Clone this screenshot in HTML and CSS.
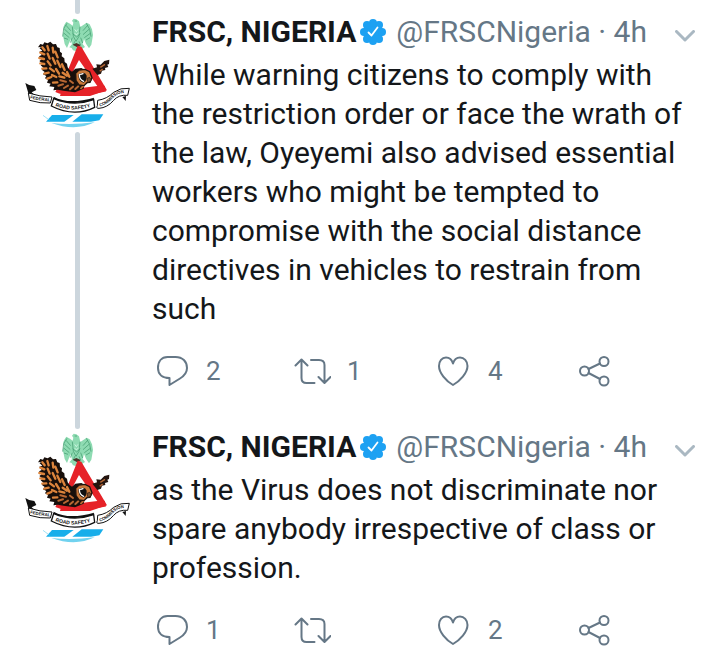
FILE: index.html
```html
<!DOCTYPE html>
<html lang="en">
<head>
    <meta charset="UTF-8">
    <meta name="viewport" content="width=device-width, initial-scale=1.0">
    <title>FRSC, NIGERIA</title>
    <link rel="stylesheet" href="styles.css">
</head>
<body>
    <svg class="symbols" aria-hidden="true">
        <symbol id="crest" viewBox="45 54 315 330">
            <!-- green eagle -->
            <path d="M199 58l-8-2-5 6 4 6-2 9-8-6-11-6-5 8-4 9 1 13-3 10 3 12 3 15 7 12 6-15 5-11 4 15-8 9 7 2 4 7 9 2 14-1 7-7 6-4-7-9 4-15 6 14 9 14 7-11 3-17 2-12-3-17-7-15-9-5-10 7-9 6-2-9-2-8z" fill="#8edbb2"/>
            <path d="M168 76l14 16M163 87l18 17M161 99l17 14M162 114l12 4M233 76l-14 16M238 87l-19 17M241 100l-18 13M240 113l-12 7M187 80l3 29 8 15 9-15 3-29M188 101l12 10 11-10M187 113l-6 15M212 113l6 16M194 124l-4 12M207 124l5 12M194 63h7M171 70l-10 16-3 24M229 70l10 18 4 22" fill="none" stroke="#3c9569" stroke-width="2"/>
            <path d="M194 88l5 7 5-7M194 99l5 6 7-7" fill="none" stroke="#e2fff0" stroke-width="2"/>
            <path d="M188 134l11-5 13 6-8 8z" fill="#4a352a"/>
            <!-- water -->
            <path d="M126 345h65l-28 20h-55z" fill="#17aeea"/>
            <path d="M215 343h65l-12 18-25 4h-56z" fill="#17aeea"/>
            <path d="M124 369q60 7 130-2-58 28-130 2z" fill="#71d2ef"/>
            <path d="M99 346l20 15" stroke="#71d2ef" stroke-width="2"/>
            <!-- warning triangle -->
            <path d="M203 137L168 225 150 288H240L291 271 214 140ZM207 180L262 258 195 266 188 216Z" fill="#e62228" fill-rule="evenodd"/>
            <path d="M140 268q40 20 146-2" fill="none" stroke="#e62228" stroke-width="18"/>
            <!-- owl wing and body -->
            <path d="M84 142l7-10 8 2 4-7 10 3 8-5 8 8 9-1 4 10 7 2 1 11 6 5-1 9 8 6 1 11 7 5 2 11 6 8 7 5 10-9 18-2 18 10 8 13-4 21-12 3-3 15-26 11-35-5-16-3-14 2 3-10-15-2 4-8-11-3 3-8-9-5 4-7-10-5 5-7-9-7 6-5-9-8 6-5-10-8 7-5-8-9 8-4-7-10 9-3-9-8 8-4z" fill="#180f0b"/>
            <path d="M97 142l7 9M91 158l12 5M112 138l4 13M88 174l14 3M91 190l12 2M97 206l12-1M103 221l13-3M112 236l12-5M113 161l6 15M128 143l2 15M136 155l7 17M113 184l9 12M128 174l8 17M120 205l12 9M142 182l9 19M126 225l13 6M138 207l9 14M156 193l8 17M148 229l15 4M158 218l13 9M129 248l13-1M171 216l7 14" fill="none" stroke="#dc843c" stroke-width="7" stroke-linecap="round"/>
            <path d="M145 257l14-4M162 264l12-7M180 268l9-8M196 267l9-8M213 265l8-8M151 241l17 4M180 242l9 7" fill="none" stroke="#b76733" stroke-width="6" stroke-linecap="round"/>
            <!-- owl head -->
            <path d="M197 220l10-10 18-2 14 7 7 18-6 14-9 1-9 9-15-2-9-13z" fill="#c9783a" stroke="#1d120d" stroke-width="4"/>
            <path d="M205 223q20-11 25 4 1 16-10 21-16-5-15-25z" fill="#111"/>
            <path d="M208 223q0 17 13 21M212 223l7-2" fill="none" stroke="#fff" stroke-width="4" stroke-linecap="round"/>
            <path d="M231 235l3 13 10-7-5-9z" fill="#7b5130" stroke="#24150f" stroke-width="2"/>
            <!-- far wing -->
            <path d="M247 206l14-4-2-9 13 1 11-11 15-4-1 13-5 2 3 7-10 3 1 6-10 2-3 9-11 4z" fill="#24150f"/>
            <path d="M271 202l14-9M269 214l9-7" stroke="#b76733" stroke-width="4"/>
            <!-- ribbon -->
            <path d="M131 290q45 25 121 3l-2 15q-65 22-121-2z" fill="#111"/>
            <path d="M46 249q12 9 27 9l6 12-14 7 8 7-17-1z" fill="#111"/>
            <path d="M55 279q34 11 71 12l-5 18q-30 2-62-8z" fill="#fff" stroke="#111" stroke-width="3"/>
            <path d="M131 296q60 25 120 3l3 23q-62 31-130-4z" fill="#fff" stroke="#111" stroke-width="4"/>
            <path d="M263 301q28-4 48-24 21-15 47-12l-5 21q-27-3-43 16-18 21-43 23-10 1-5-8z" fill="#fff" stroke="#111" stroke-width="3"/>
            <path d="M337 291l10 12 1-15z" fill="#111"/>
            <path id="ribbon-left" d="M60 295q30 9 75 9" fill="none"/>
            <path id="ribbon-middle" d="M136 318q54 23 125-4" fill="none"/>
            <path id="ribbon-right" d="M269 319q22-4 39-24 17-18 52-18" fill="none"/>
            <g class="ribbon-text">
                <text><textPath href="#ribbon-left">FEDERAL</textPath></text>
                <text class="ribbon-middle"><textPath href="#ribbon-middle">ROAD SAFETY</textPath></text>
                <text><textPath href="#ribbon-right">COMMISSION</textPath></text>
            </g>
        </symbol>

        <symbol id="verified" viewBox="0 0 26 26">
            <g fill="#1da1f2">
                <circle cx="13" cy="13" r="10"/>
                <circle cx="13" cy="4" r="4"/>
                <circle cx="19" cy="6" r="4"/>
                <circle cx="22" cy="13" r="4"/>
                <circle cx="19" cy="20" r="4"/>
                <circle cx="13" cy="22" r="4"/>
                <circle cx="7" cy="20" r="4"/>
                <circle cx="4" cy="13" r="4"/>
                <circle cx="7" cy="6" r="4"/>
            </g>
            <path d="M8.5 13.5l3 3 6-8" fill="none" stroke="#fff" stroke-width="1.8" stroke-linecap="round" stroke-linejoin="round"/>
        </symbol>

        <symbol id="chevron" viewBox="0 0 20 12">
            <path d="M1.5 1.5l8.5 8.5 8.5-8.5"/>
        </symbol>
        <symbol id="reply" viewBox="0 0 38 32">
            <path d="M15.500 2h8C30.500 2 35 6.500 35 13c0 5-3 8-7 10.500L17.500 30v-7C10.500 23 6 19.500 6 13 6 6.500 9.500 2 15.500 2z"/>
        </symbol>
        <symbol id="retweet" viewBox="0 0 38 32">
            <path d="M2.500 10.500L8.500 4.500l6 6M8.500 5v18c0 3.500 1.500 5 5 5h8M18 5h8c3.500 0 5.500 1.500 5.500 5v17.500M25.500 22l6 6 6-6"/>
        </symbol>
        <symbol id="heart" viewBox="0 0 38 32">
            <path d="M19 30C12 26 5 18 5 11 5 6 8 2.500 12 2.500c3.500 0 6 2.500 7 6 1-3.500 3.500-6 7-6 4 0 7.500 3.500 7.500 8.500 0 7-7.500 15-14.500 19z"/>
        </symbol>
        <symbol id="share" viewBox="0 0 38 32">
            <circle cx="9.500" cy="16" r="4.500"/>
            <circle cx="29" cy="6.500" r="4.500"/>
            <circle cx="29" cy="26" r="4.500"/>
            <path d="M13.500 14l11.500-5.500M13.500 18l11.500 6"/>
        </symbol>
    </svg>

    <main class="thread">
        <article class="tweet">
            <div class="rail">
                <span class="line line-top"></span>
                <svg class="avatar" role="img" aria-label="FRSC"><use href="#crest"/></svg>
                <span class="line line-bottom"></span>
            </div>
            <div class="content">
                <header class="tweet-header">
                    <strong class="name">FRSC, NIGERIA</strong>
                    <svg class="verified"><use href="#verified"/></svg>
                    <span class="handle">@FRSCNigeria · 4h</span>
                    <button class="more" aria-label="More"><svg><use href="#chevron"/></svg></button>
                </header>
                <p class="text">While warning citizens to comply with the restriction order or face the wrath of the law, Oyeyemi also advised essential workers who might be tempted to compromise with the social distance directives in vehicles to restrain from such</p>
                <footer class="actions">
                    <button aria-label="Reply"><svg><use href="#reply"/></svg>2</button>
                    <button aria-label="Retweet"><svg><use href="#retweet"/></svg>1</button>
                    <button aria-label="Like"><svg><use href="#heart"/></svg>4</button>
                    <button aria-label="Share"><svg><use href="#share"/></svg></button>
                </footer>
            </div>
        </article>

        <article class="tweet">
            <div class="rail">
                <span class="line line-top"></span>
                <svg class="avatar" role="img" aria-label="FRSC"><use href="#crest"/></svg>
            </div>
            <div class="content">
                <header class="tweet-header">
                    <strong class="name">FRSC, NIGERIA</strong>
                    <svg class="verified"><use href="#verified"/></svg>
                    <span class="handle">@FRSCNigeria · 4h</span>
                    <button class="more" aria-label="More"><svg><use href="#chevron"/></svg></button>
                </header>
                <p class="text">as the Virus does not discriminate nor spare anybody irrespective of class or profession.</p>
                <footer class="actions">
                    <button aria-label="Reply"><svg><use href="#reply"/></svg>1</button>
                    <button aria-label="Retweet"><svg><use href="#retweet"/></svg></button>
                    <button aria-label="Like"><svg><use href="#heart"/></svg>2</button>
                    <button aria-label="Share"><svg><use href="#share"/></svg></button>
                </footer>
            </div>
        </article>
    </main>
</body>
</html>
```
FILE: styles.css
```css
body {
    margin: 0;
    background-color: #fff;
    color: #14171a;
    font-family: Roboto, sans-serif;
    font-size: 30px;
}

.symbols {
    position: absolute;
    width: 0;
    height: 0;
}

.tweet {
    display: flex;
}

.rail {
    display: flex;
    flex-direction: column;
    align-items: center;
    gap: 4px;
    flex: none;
    width: 105px;
    padding-left: 25px;
    margin-right: 22px;
}

.line {
    width: 5px;
    background-color: #ccd6dd;
}

.line-top {
    height: 14px;
    border-radius: 0 0 3px 3px;
}

.line-bottom {
    flex: 1;
    border-radius: 3px 3px 0 0;
}

.avatar {
    width: 105px;
    height: 110px;
}

.ribbon-text {
    fill: #111;
    font-family: "Liberation Sans", sans-serif;
    font-size: 13px;
    font-weight: bold;
}

.ribbon-middle {
    font-size: 15px;
}

.content {
    flex: 1;
    min-width: 0;
    padding-top: 12px;
}

.tweet-header {
    display: flex;
    align-items: center;
    padding-right: 25px;
    line-height: 39px;
    white-space: nowrap;
}

.name {
    font-weight: bold;
}

.verified {
    width: 26px;
    height: 26px;
    margin: 0 10px 0 4px;
}

.handle {
    color: #657786;
}

button {
    padding: 0;
    border: none;
    background: none;
    color: #657786;
    font-family: inherit;
    font-size: 26px;
    cursor: pointer;
}

button svg {
    fill: none;
    stroke: currentColor;
    stroke-width: 2px;
    stroke-linecap: round;
    stroke-linejoin: round;
}

.more {
    display: flex;
    margin-left: auto;
    padding-top: 8px;
    color: #aab8c2;
}

.more svg {
    width: 20px;
    height: 12px;
    stroke-width: 3px;
}

.text {
    margin: 4px 24px 0 0;
    line-height: 39px;
}

.actions {
    display: grid;
    grid-template-columns: repeat(4, 1fr);
    padding: 27px 4px 28px 0;
}

.actions button {
    display: flex;
    align-items: center;
    gap: 16px;
    height: 32px;
}

.actions svg {
    width: 38px;
    height: 32px;
}
```
